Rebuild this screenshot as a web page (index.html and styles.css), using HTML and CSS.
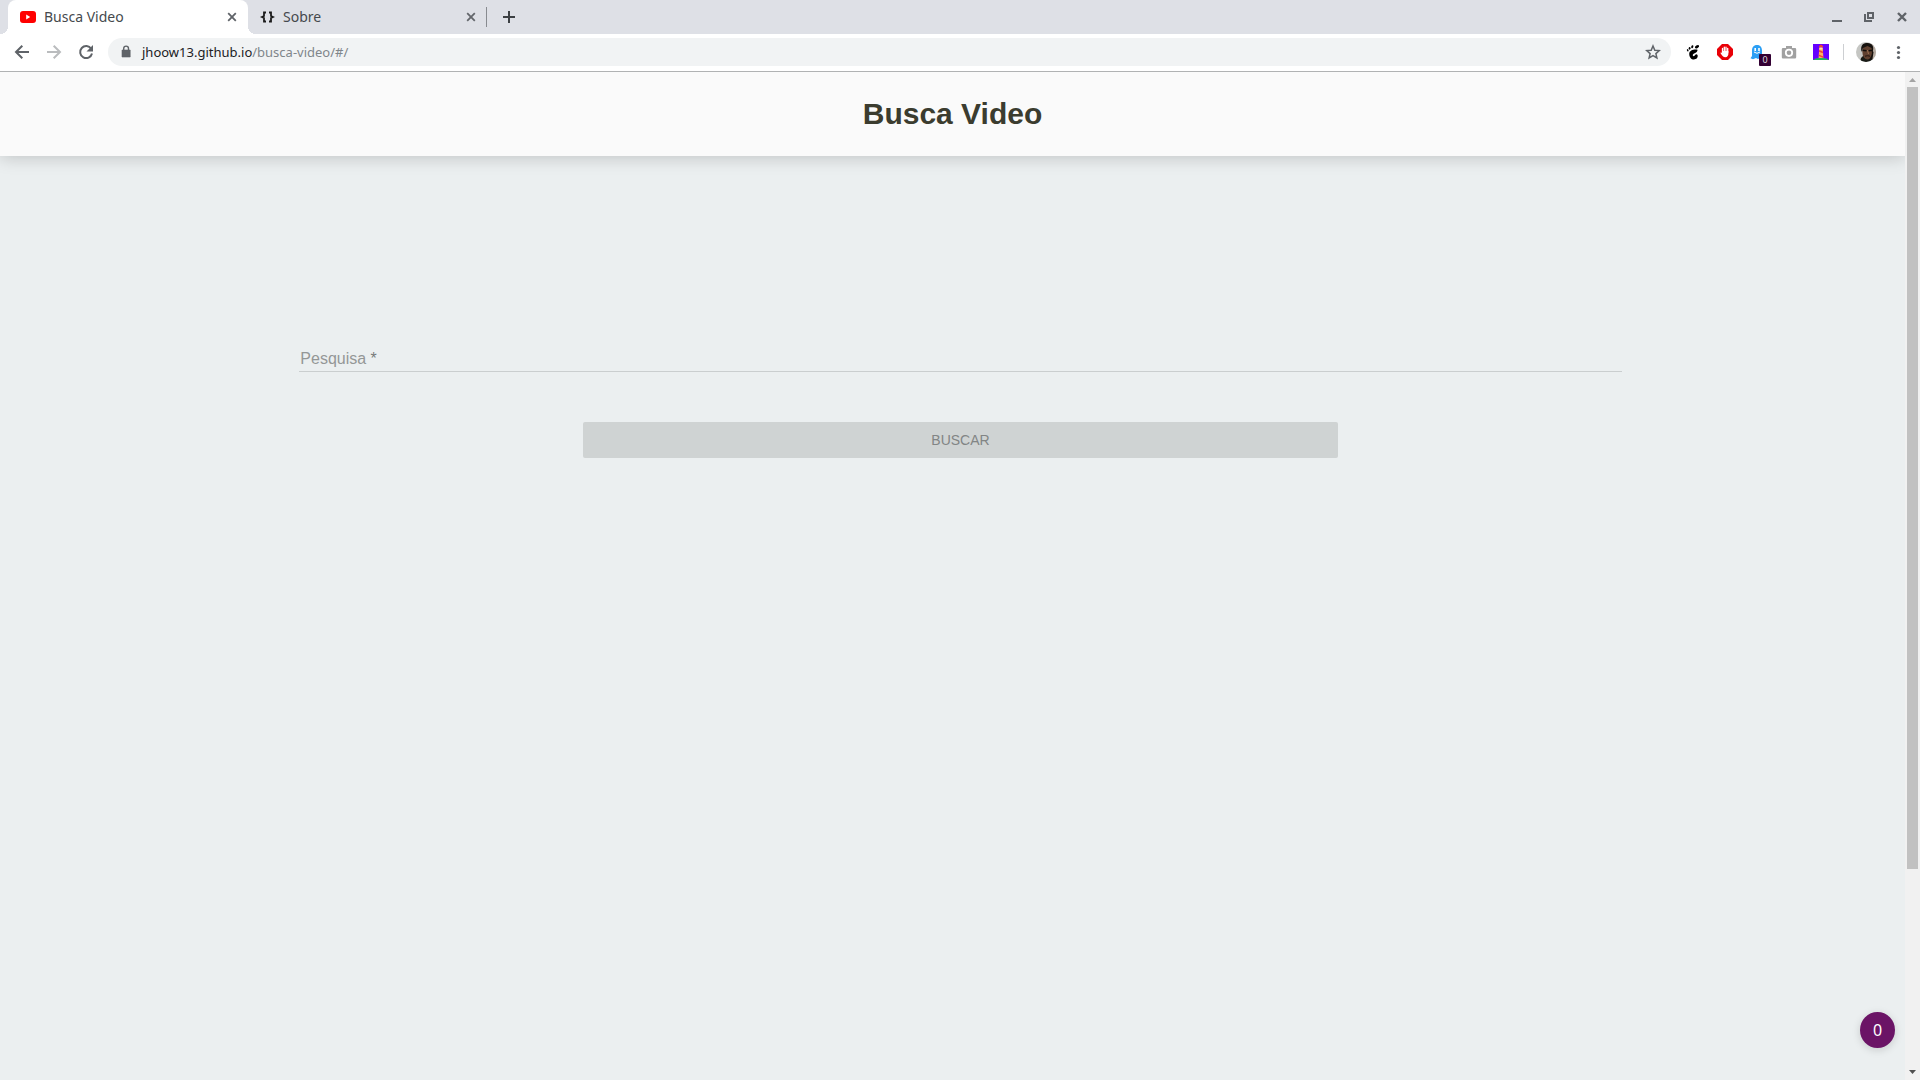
FILE: index.html
```html
<!DOCTYPE html>
<html lang="pt-BR">
<head>
<meta charset="utf-8">
<meta name="viewport" content="width=device-width, initial-scale=1">
<title>Busca Video</title>
<link rel="stylesheet" href="styles.css">
</head>
<body>
<div class="tab-strip">
  <div class="tab tab-active">
    <svg class="icon" viewBox="0 0 16 16"><rect y="2" width="16" height="12" rx="3" fill="#f00"/><path d="M6.200 5.500v5l4-2.500z" fill="#fff"/></svg>
    <span class="tab-title">Busca Video</span>
    <button class="icon-button" aria-label="Fechar guia"><svg class="icon" viewBox="0 0 16 16"><path d="M4.200 4.200l7.600 7.600M11.800 4.200l-7.600 7.600" fill="none" stroke="#5f6368" stroke-width="1.800"/></svg></button>
  </div>
  <div class="tab tab-idle">
    <svg class="icon" viewBox="0 0 16 16"><path d="M7 3.500H5V7L3 8l2 1v3.500h2M10 3.500h2V7l2 1-2 1v3.500h-2" fill="none" stroke="#1b1b1b" stroke-width="1.800"/></svg>
    <span class="tab-title">Sobre</span>
    <button class="icon-button" aria-label="Fechar guia"><svg class="icon" viewBox="0 0 16 16"><path d="M4.200 4.200l7.600 7.600M11.800 4.200l-7.600 7.600" fill="none" stroke="#63666b" stroke-width="1.800"/></svg></button>
  </div>
  <span class="tab-separator"></span>
  <button class="icon-button new-tab" aria-label="Nova guia"><svg class="icon" viewBox="0 0 16 16"><path d="M8 2v12M2 8h12" stroke="#3c4043" stroke-width="2"/></svg></button>
  <div class="window-controls">
    <button class="icon-button" aria-label="Minimizar"><svg class="icon" viewBox="0 0 16 16"><path d="M4 12h10" stroke="#5f6368" stroke-width="2"/></svg></button>
    <button class="icon-button" aria-label="Restaurar"><svg class="icon" viewBox="0 0 16 16"><path d="M7 4h5v5H7zM4 5v7h7" fill="none" stroke="#5f6368" stroke-width="2"/></svg></button>
    <button class="icon-button" aria-label="Fechar"><svg class="icon" viewBox="0 0 16 16"><path d="M4 4l8 8M12 4l-8 8" stroke="#5f6368" stroke-width="2.400"/></svg></button>
  </div>
</div>
<div class="toolbar">
  <div class="nav-buttons">
    <button class="icon-button" aria-label="Voltar"><svg class="icon" viewBox="0 0 16 16"><path d="M8.300 1.700L2 8l6.300 6.300M2 8h13" fill="none" stroke="#5f6368" stroke-width="2"/></svg></button>
    <button class="icon-button" aria-label="Avançar"><svg class="icon" viewBox="0 0 16 16"><path d="M7.700 1.700L14 8l-6.300 6.300M14 8H1" fill="none" stroke="#babcbe" stroke-width="2"/></svg></button>
    <button class="icon-button" aria-label="Recarregar"><svg class="icon" viewBox="0 0 16 16"><path d="M13.200 4.800A6 6 0 1 0 14 9.500" fill="none" stroke="#5f6368" stroke-width="2"/><path d="M15 1v6.500H8.500z" fill="#5f6368"/></svg></button>
  </div>
  <div class="address-bar">
    <svg class="icon" viewBox="0 0 16 16"><path d="M4 6h8.200v7H4z" fill="#5f6368" stroke="#5f6368" stroke-linejoin="round" stroke-width=".6"/><path d="M5.700 6V4.500a2.400 2.400 0 0 1 4.800 0V6" fill="none" stroke="#5f6368" stroke-width="1.400"/></svg>
    <a class="address" href="#/">jhoow13.github.io<span class="address-path">/busca-video/#/</span></a>
    <button class="icon-button" aria-label="Favoritar"><svg class="icon" viewBox="0 0 16 16"><path d="M8 2l1.800 4.200 4.500.4-3.400 3 1 4.400L8 11.700 4.100 14l1-4.400-3.400-3 4.500-.4z" fill="none" stroke="#5f6368" stroke-width="1.500"/></svg></button>
  </div>
  <div class="extensions">
    <button class="icon-button" aria-label="GNOME"><svg class="icon" viewBox="0 0 16 16"><ellipse cx="12" cy="2.700" rx="2.300" ry="1.400" transform="rotate(-30 12 2.700)"/><ellipse cx="7.300" cy="2.800" rx="1" ry="1.600" transform="rotate(18 7.300 2.800)"/><ellipse cx="4.600" cy="4.300" rx=".9" ry="1.400"/><ellipse cx="2.700" cy="6.300" rx=".8" ry="1.200" transform="rotate(-20 2.700 6.300)"/><path d="M12.500 5.800C10 4.800 4.200 6 4.200 9.700c0 3.500 2.100 5.800 4.700 5.800 2.500 0 4.300-2 3.700-4.200-.4-1.300-2-1.200-2.500-.2-.5 1.300-1.900 1.500-2.300.4C7.300 9 12.900 9.200 12.500 5.800z"/></svg></button>
    <button class="icon-button" aria-label="AdBlock"><svg class="icon" viewBox="0 0 16 16"><path d="M5 0h6l5 5v6l-5 5H5l-5-5V5z" fill="#e90007"/><path d="M5.500 9V4.500M7.300 8V3.200M9 8V3.200M10.700 8.500V4.300" stroke="#fff" stroke-width="1.300" stroke-linecap="round"/><path d="M5 7h6.400v2.500c0 2-1 3.700-3 3.700-2.200 0-2.900-1.300-5-4.200.7-.8 1.400-.2 2 .4z" fill="#fff"/></svg></button>
    <button class="icon-button extension-badged" aria-label="Ghostery"><svg class="icon" viewBox="0 0 16 16"><path d="M8 1c3.600 0 5 2.500 5 5.500V12l1 3-3-1-2 1-2-1-3 1.200-2.500-1L3 12V6.500C3 3.500 4.400 1 8 1z" fill="#2b9ff5"/><path d="M6.200 4v3M10 4v3" stroke="#fff" stroke-width="1.600"/><path d="M5 8q3 2.600 6 0" fill="none" stroke="#fff"/></svg><span class="extension-count">0</span></button>
    <button class="icon-button" aria-label="Captura"><svg class="icon" viewBox="0 0 16 16"><path d="M2 4h3V2h6v2h3q1.200 0 1.200 1.200v8q0 1.300-1.200 1.300H2q-1.200 0-1.200-1.300v-8Q.8 4 2 4z" fill="#a1a1a1"/><circle cx="8" cy="8.800" r="3.200" fill="#a1a1a1" stroke="#fff" stroke-width="1.800"/></svg></button>
    <button class="icon-button" aria-label="Lighthouse"><svg class="icon" viewBox="0 0 16 16"><path d="M0 0h16v16H0z" fill="#6500ff"/><path d="M6.200 4h3.600l.6 11H5.600z" fill="#ffb060"/><path d="M6 2l2-1.500L10 2v1.500H6zM6.200 6l3.700 1.500v1.800L6 7.800zM5.800 10.500l4.500 2V14l-4.500-2z" fill="#ef4136"/><path d="M6.500 3.500h3v2h-3z" fill="#ffe4a3"/><path d="M0 16q2-2 6-2h4q4 0 6 2z" fill="#20b65a"/></svg></button>
  </div>
  <span class="toolbar-separator"></span>
  <div class="extensions">
    <button class="icon-button" aria-label="Perfil"><svg class="avatar" viewBox="0 0 20 20"><defs><clipPath id="avatar-clip"><circle cx="10" cy="10" r="10"/></clipPath></defs><g clip-path="url(#avatar-clip)"><path d="M0 0h20v20H0z" fill="#c5c6c3"/><path d="M4 20l1-4 3-3 8 1 2 6z" fill="#191b16"/><path d="M15 1h5v17h-4z" fill="#b5aaa0"/><ellipse cx="11.500" cy="9.500" rx="5.200" ry="8" fill="#60402f"/><path d="M5.500 10C4 2 8 1 11.500 1c5 0 7 4 5 9l-1-4-4-2-4.500 2z" fill="#16120f"/><path d="M6.500 8.300l4 .5M12.500 8.800l4-.5" stroke="#120d0a" stroke-width="1.600"/><path d="M9 14.200q2.500-1 5 0" fill="none" stroke="#24140f"/><path d="M11.500 8l1 4" stroke="#9b7053"/><path d="M15.500 8q1.500 5-3 10l4-1 1-7z" fill="#17110d"/></g></svg></button>
    <button class="icon-button" aria-label="Menu"><svg class="icon" viewBox="0 0 16 16" fill="#5f6368"><circle cx="8.500" cy="3.500" r="1.600"/><circle cx="8.500" cy="8.500" r="1.600"/><circle cx="8.500" cy="13.500" r="1.600"/></svg></button>
  </div>
</div>
<div class="viewport">
  <div class="page">
    <header class="page-header"><h1 class="page-title">Busca Video</h1></header>
    <main class="content">
      <form class="search">
        <div class="field">
          <label class="field-label" for="query">Pesquisa <span class="required">*</span></label>
          <input class="field-input" id="query" type="text" required>
        </div>
        <button class="submit" type="submit" disabled>BUSCAR</button>
      </form>
    </main>
    <button class="tracker-count" type="button">0</button>
  </div>
  <div class="scrollbar">
    <svg class="scroll-arrow" viewBox="0 0 15 15"><path d="M4 10h7L7.500 6z" fill="#a3a3a3"/></svg>
    <div class="scroll-track"><div class="scroll-thumb"></div></div>
    <svg class="scroll-arrow" viewBox="0 0 15 15"><path d="M4 5h7L7.500 9z" fill="#505050"/></svg>
  </div>
</div>
</body>
</html>
```
FILE: styles.css
```css
* {
  box-sizing: border-box;
}

body {
  display: flex;
  flex-direction: column;
  min-height: 100vh;
  margin: 0;
  background: #fff;
  font-family: "Noto Sans", sans-serif;
  font-size: 14px;
}

button {
  padding: 0;
  border: 0;
  background: none;
  font: inherit;
}

.icon {
  display: block;
  flex: none;
  width: 16px;
  height: 16px;
}

.icon-button {
  display: grid;
  flex: none;
  place-items: center;
}

/* Browser tabs */
.tab-strip {
  display: flex;
  align-items: center;
  height: 34px;
  padding-left: 8px;
  background: #dee0e6;
}

.tab {
  display: flex;
  align-items: center;
  gap: 8px;
  width: 240px;
  height: 34px;
  padding: 0 8px 0 12px;
  color: #45494d;
}

.tab-active {
  position: relative;
  border-radius: 8px 8px 0 0;
  background: #fff;
}

.tab-active::before,
.tab-active::after {
  content: "";
  position: absolute;
  bottom: 0;
  width: 8px;
  height: 8px;
}

.tab-active::before {
  right: 100%;
  background: radial-gradient(circle at 0 0, transparent 8px, #fff 8px);
}

.tab-active::after {
  left: 100%;
  background: radial-gradient(circle at 100% 0, transparent 8px, #fff 8px);
}

.tab-idle {
  width: 238px;
  padding: 0 7px 0 11px;
}

.tab-title {
  flex: 1;
  padding-bottom: 2px;
}

.tab-separator {
  width: 1px;
  height: 20px;
  background: #888b90;
}

.new-tab {
  margin-left: 14px;
}

.window-controls {
  display: flex;
  gap: 17px;
  margin-left: auto;
  padding-right: 10px;
}

/* Browser toolbar */
.toolbar {
  display: flex;
  align-items: center;
  height: 38px;
  padding: 0 6px 1px 0;
  border-bottom: 1px solid #b0b2b3;
}

.nav-buttons {
  display: flex;
  gap: 16px;
  padding: 0 14px;
}

.address-bar {
  display: flex;
  flex: 1;
  align-items: center;
  gap: 8px;
  height: 28px;
  padding: 0 10px;
  border-radius: 14px;
  background: #f1f3f4;
}

.address {
  flex: 1;
  color: #202124;
  font-size: 13px;
  text-decoration: none;
}

.address-path {
  color: #80868b;
}

.extensions {
  display: flex;
}

.address-bar + .extensions {
  margin-left: 6px;
}

.extensions .icon-button {
  width: 32px;
}

.extension-badged {
  position: relative;
}

.extension-count {
  position: absolute;
  top: 10px;
  right: 2px;
  width: 12px;
  height: 12px;
  border-radius: 1px;
  background: #330033;
  color: #ddd;
  font-size: 9px;
  line-height: 12px;
  text-align: center;
}

.toolbar-separator {
  width: 1px;
  height: 16px;
  margin: 0 6px;
  background: #cdcfd2;
}

.avatar {
  width: 20px;
  height: 20px;
}

/* Page */
.viewport {
  display: flex;
  flex: 1;
}

.page {
  position: relative;
  flex: 1;
  overflow: hidden;
  background: #ebeff0;
  font-family: "Liberation Sans", Arial, sans-serif;
}

.page-header {
  padding: 24px;
  background: #fafafa;
  box-shadow: 0 2px 16px rgba(0, 0, 0, 0.18);
  text-align: center;
}

.page-title {
  margin: 0;
  color: #3b3c2f;
  font-size: 30px;
  line-height: 36px;
}

.content {
  padding: 190px 0 0 16px;
}

.search {
  display: flex;
  flex-direction: column;
  align-items: center;
  gap: 50px;
}

.field {
  display: grid;
  width: 70%;
}

.field-label,
.field-input {
  grid-area: 1 / 1;
  font-size: 16px;
  line-height: 20px;
}

.field-label {
  padding: 3px 1px;
  color: #949797;
}

.required {
  color: #777a7a;
}

.field-input {
  width: 100%;
  height: 26px;
  padding: 0 1px;
  border: 0;
  border-bottom: 1px solid #cacecf;
  background: transparent;
  outline: 0;
}

.submit {
  width: 40%;
  height: 36px;
  border-radius: 2px;
  background: #cfd3d3;
  color: #828585;
  font-size: 14px;
}

.tracker-count {
  position: absolute;
  right: 10px;
  bottom: 32px;
  width: 35px;
  height: 36px;
  padding-bottom: 1px;
  border-radius: 50%;
  background: #6b1466;
  box-shadow: 0 2px 8px rgba(0, 0, 0, 0.15);
  color: #fff;
  font-family: "Noto Sans", sans-serif;
  font-size: 16px;
}

/* Scroll bar */
.scrollbar {
  display: flex;
  flex-direction: column;
  width: 15px;
  background: #f1f1f1;
}

.scroll-arrow {
  width: 15px;
  height: 15px;
}

.scroll-track {
  display: flex;
  flex: 1;
  padding: 0 2px;
}

.scroll-thumb {
  width: 100%;
  height: 80%;
  background: #c1c1c1;
}
```
